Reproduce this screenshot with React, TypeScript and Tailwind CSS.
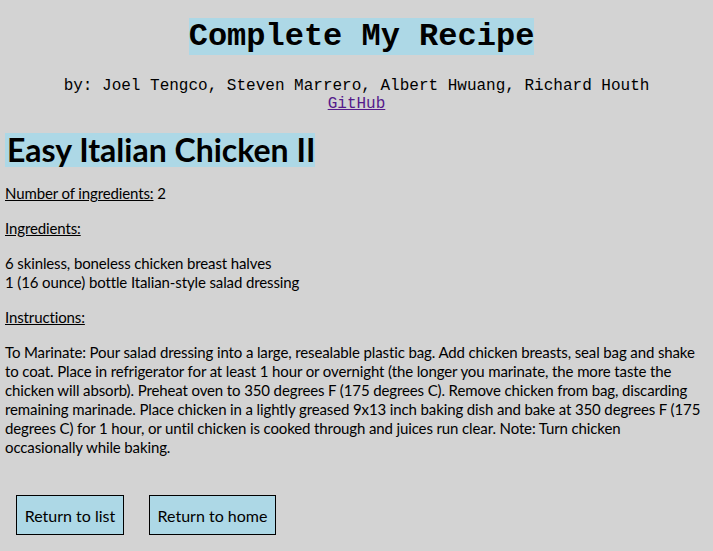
import React from "react";

export default function App() {
  return (
    <div className="min-h-screen bg-[#d3d3d3] px-[5px] pb-[16px] text-black">
      <header className="text-center font-['Liberation_Mono',monospace]">
        <h1 className="pl-[10px] pt-[18px] text-[32px] font-bold leading-[37px]">
          <span className="bg-[#add8e6]">Complete My Recipe</span>
        </h1>
        <p className="mt-[22px] text-[16px] leading-[18px]">
          by: Joel Tengco, Steven Marrero, Albert Hwuang, Richard Houth
          <br />
          <a href="#" className="text-[#551a8b] underline">
            GitHub
          </a>
        </p>
      </header>
      <main className="font-['Lato',sans-serif] text-[15px] leading-[19px] tracking-[-0.12px]">
        <h2 className="mt-[20px] text-[32px] font-bold leading-[34px] tracking-normal">
          <span className="inline-block bg-[#add8e6] pl-[2px]">Easy Italian Chicken II</span>
        </h2>
        <p className="mt-[17px]">
          <span className="underline">Number of ingredients:</span> 2
        </p>
        <p className="mt-[16px]">
          <span className="underline">Ingredients:</span>
        </p>
        <div className="mt-[16px]">
          <div>6 skinless, boneless chicken breast halves</div>
          <div>1 (16 ounce) bottle Italian-style salad dressing</div>
        </div>
        <p className="mt-[16px]">
          <span className="underline">Instructions:</span>
        </p>
        <p className="mt-[16px]">
          To Marinate: Pour salad dressing into a large, resealable plastic bag. Add chicken breasts, seal bag and shake
          <br />
          to coat. Place in refrigerator for at least 1 hour or overnight (the longer you marinate, the more taste the
          <br />
          chicken will absorb). Preheat oven to 350 degrees F (175 degrees C). Remove chicken from bag, discarding
          <br />
          remaining marinade. Place chicken in a lightly greased 9x13 inch baking dish and bake at 350 degrees F (175
          <br />
          degrees C) for 1 hour, or until chicken is cooked through and juices run clear. Note: Turn chicken
          <br />
          occasionally while baking.
        </p>
        <div className="mt-[38px] flex gap-[25px] pl-[11px] tracking-normal">
          <button className="h-[40px] w-[108px] border border-black bg-[#add8e6] text-center text-[16px]">
            Return to list
          </button>
          <button className="h-[40px] w-[127px] border border-black bg-[#add8e6] text-center text-[16px]">
            Return to home
          </button>
        </div>
      </main>
    </div>
  );
}
